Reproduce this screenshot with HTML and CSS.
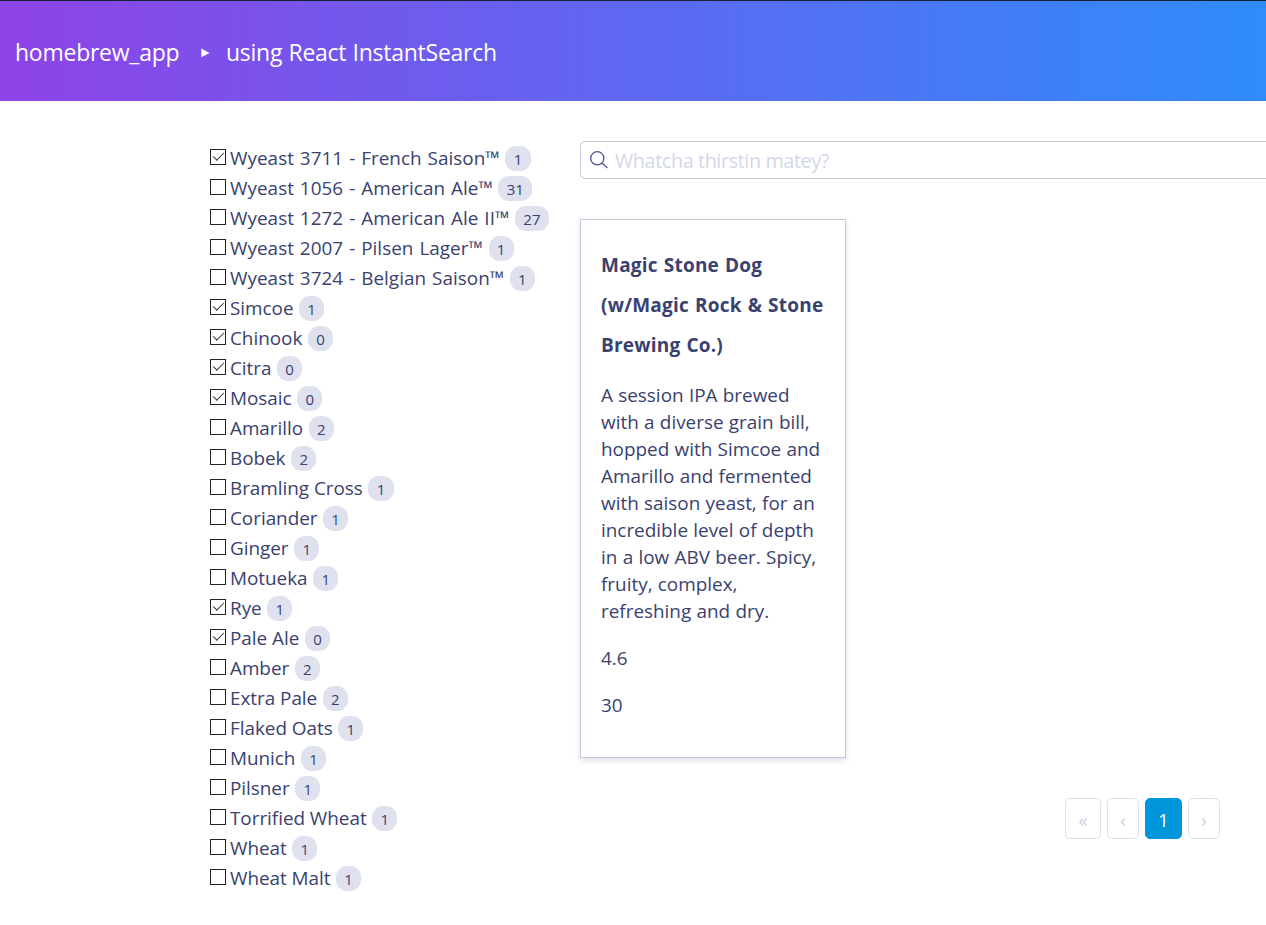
FILE: index.html
```html
<!DOCTYPE html>
<html lang="en">
<head>
<meta charset="utf-8">
<title>homebrew_app</title>
<link rel="stylesheet" href="styles.css">
</head>
<body>
<header class="header">
  <h1 class="header-title">homebrew_app</h1>
  <svg class="header-arrow" width="9" height="10" viewBox="0 0 9 10"><path d="M0.3 0.5 8.6 4.9 0.3 9.3z" fill="#fff"/></svg>
  <p class="header-subtitle">using React InstantSearch</p>
</header>
<div class="container">
  <ul class="filters">
    <li class="filter"><span class="box checked"></span><span class="label yeast">Wyeast 3711 - French Saison™</span><span class="count">1</span></li>
    <li class="filter"><span class="box"></span><span class="label yeast">Wyeast 1056 - American Ale™</span><span class="count">31</span></li>
    <li class="filter"><span class="box"></span><span class="label yeast">Wyeast 1272 - American Ale II™</span><span class="count">27</span></li>
    <li class="filter"><span class="box"></span><span class="label yeast">Wyeast 2007 - Pilsen Lager™</span><span class="count">1</span></li>
    <li class="filter"><span class="box"></span><span class="label yeast">Wyeast 3724 - Belgian Saison™</span><span class="count">1</span></li>
    <li class="filter"><span class="box checked"></span><span class="label">Simcoe</span><span class="count">1</span></li>
    <li class="filter"><span class="box checked"></span><span class="label">Chinook</span><span class="count">0</span></li>
    <li class="filter"><span class="box checked"></span><span class="label">Citra</span><span class="count">0</span></li>
    <li class="filter"><span class="box checked"></span><span class="label">Mosaic</span><span class="count">0</span></li>
    <li class="filter"><span class="box"></span><span class="label">Amarillo</span><span class="count">2</span></li>
    <li class="filter"><span class="box"></span><span class="label">Bobek</span><span class="count">2</span></li>
    <li class="filter"><span class="box"></span><span class="label">Bramling Cross</span><span class="count">1</span></li>
    <li class="filter"><span class="box"></span><span class="label">Coriander</span><span class="count">1</span></li>
    <li class="filter"><span class="box"></span><span class="label">Ginger</span><span class="count">1</span></li>
    <li class="filter"><span class="box"></span><span class="label">Motueka</span><span class="count">1</span></li>
    <li class="filter"><span class="box checked"></span><span class="label">Rye</span><span class="count">1</span></li>
    <li class="filter"><span class="box checked"></span><span class="label">Pale Ale</span><span class="count">0</span></li>
    <li class="filter"><span class="box"></span><span class="label">Amber</span><span class="count">2</span></li>
    <li class="filter"><span class="box"></span><span class="label">Extra Pale</span><span class="count">2</span></li>
    <li class="filter"><span class="box"></span><span class="label">Flaked Oats</span><span class="count">1</span></li>
    <li class="filter"><span class="box"></span><span class="label">Munich</span><span class="count">1</span></li>
    <li class="filter"><span class="box"></span><span class="label">Pilsner</span><span class="count">1</span></li>
    <li class="filter"><span class="box"></span><span class="label">Torrified Wheat</span><span class="count">1</span></li>
    <li class="filter"><span class="box"></span><span class="label">Wheat</span><span class="count">1</span></li>
    <li class="filter"><span class="box"></span><span class="label">Wheat Malt</span><span class="count">1</span></li>
  </ul>
  <main class="results">
    <div class="search">
      <svg width="18" height="18" viewBox="0 0 18 18" fill="none" stroke="#4b568c" stroke-width="1.3"><circle cx="7.3" cy="7.3" r="6.6"/><path d="M12 12l5.4 5"/></svg>
      <span class="placeholder">Whatcha thirstin matey?</span>
    </div>
    <article class="card">
      <h2 class="card-title">Magic Stone Dog<br>(w/Magic Rock &amp; Stone<br>Brewing Co.)</h2>
      <p class="card-text">A session IPA brewed<br>with a diverse grain bill,<br>hopped with Simcoe and<br>Amarillo and fermented<br>with saison yeast, for an<br>incredible level of depth<br>in a low ABV beer. Spicy,<br>fruity, complex,<br>refreshing and dry.</p>
      <p class="card-text">4.6</p>
      <p class="card-text">30</p>
    </article>
    <nav class="pagination">
      <span class="page first">«</span>
      <span class="page">‹</span>
      <span class="page current">1</span>
      <span class="page">›</span>
    </nav>
  </main>
</div>
</body>
</html>
```
FILE: styles.css
```css
* { box-sizing: border-box; }
body {
  margin: 0;
  height: 925px;
  overflow: hidden;
  background: #fff;
  color: #3a416f;
  font-family: "Open Sans", "Noto Sans", sans-serif;
}
h1, h2, p, ul { margin: 0; padding: 0; font-weight: 400; }
.header {
  display: flex;
  align-items: center;
  height: 101px;
  padding: 3px 15px 0;
  border-top: 1px solid #162138;
  background: linear-gradient(to right, #8e43e7, #2f8cfa);
  color: #fff;
  white-space: nowrap;
}
.header-title, .header-subtitle { font-size: 23px; letter-spacing: -0.25px; line-height: 29px; }
.header-title { width: 164px; }
.header-subtitle { word-spacing: 0.5px; }
.header-arrow { margin: 0 16px 0 22px; }
.container { display: flex; padding: 40px 0 0 210px; }
.filters {
  flex: none;
  width: 370px;
  padding-top: 2px;
  list-style: none;
}
.filter { display: flex; height: 30px; align-items: flex-start; white-space: nowrap; }
.box {
  flex: none;
  position: relative;
  width: 16px;
  height: 16px;
  margin: 6px 4px 0 0;
  border: 1px solid #222;
}
.box.checked::after {
  content: "";
  position: absolute;
  left: 2px;
  top: 2px;
  width: 10px;
  height: 5px;
  border: solid #333;
  border-width: 0 0 1.8px 1.8px;
  transform: rotate(-45deg) scale(0.95);
}
.label, .card-text { font-size: 18.9px; }
.label { line-height: 30px; letter-spacing: -0.03px; }
.label.yeast { letter-spacing: 0.03px; word-spacing: 1px; }
.count {
  height: 25px;
  margin: 3px 0 0 5.6px;
  padding: 1px 8.3px 0;
  border-radius: 11px;
  background: #dfe2ee;
  font-size: 15px;
  line-height: 25px;
}
.results { flex: none; width: 726px; }
.search {
  display: flex;
  align-items: center;
  height: 38px;
  padding-left: 9px;
  border: 1px solid #c4c8d8;
  border-radius: 5px;
}
.placeholder { margin: 1px 0 0 7px; color: #d3d7e9; font-size: 19.8px; letter-spacing: -0.4px; line-height: 30px; }
.card {
  width: 266px;
  height: 539px;
  margin-top: 40px;
  padding: 25px 0 0 20px;
  border: 1px solid #c4c8d8;
  box-shadow: 0 3px 6px rgba(58, 65, 111, 0.14);
  white-space: nowrap;
}
.card-title {
  margin-bottom: 17px;
  font-size: 19px;
  font-weight: 700;
  letter-spacing: 0.22px;
  word-spacing: 0.8px;
  line-height: 40px;
}
.card-text { margin-bottom: 20px; line-height: 27px; word-spacing: 0.4px; }
.pagination { display: flex; gap: 6px; margin: 40px 0 0 485px; }
.page {
  width: 32px;
  height: 41px;
  border: 1px solid #dfe0ec;
  border-radius: 5px;
  color: #c9cee2;
  font-size: 18px;
  line-height: 42px;
  text-align: center;
}
.first { width: 36px; }
.current { width: 37px; border-color: #0096db; background: #0096db; color: #fff; font-size: 19px; }
```
